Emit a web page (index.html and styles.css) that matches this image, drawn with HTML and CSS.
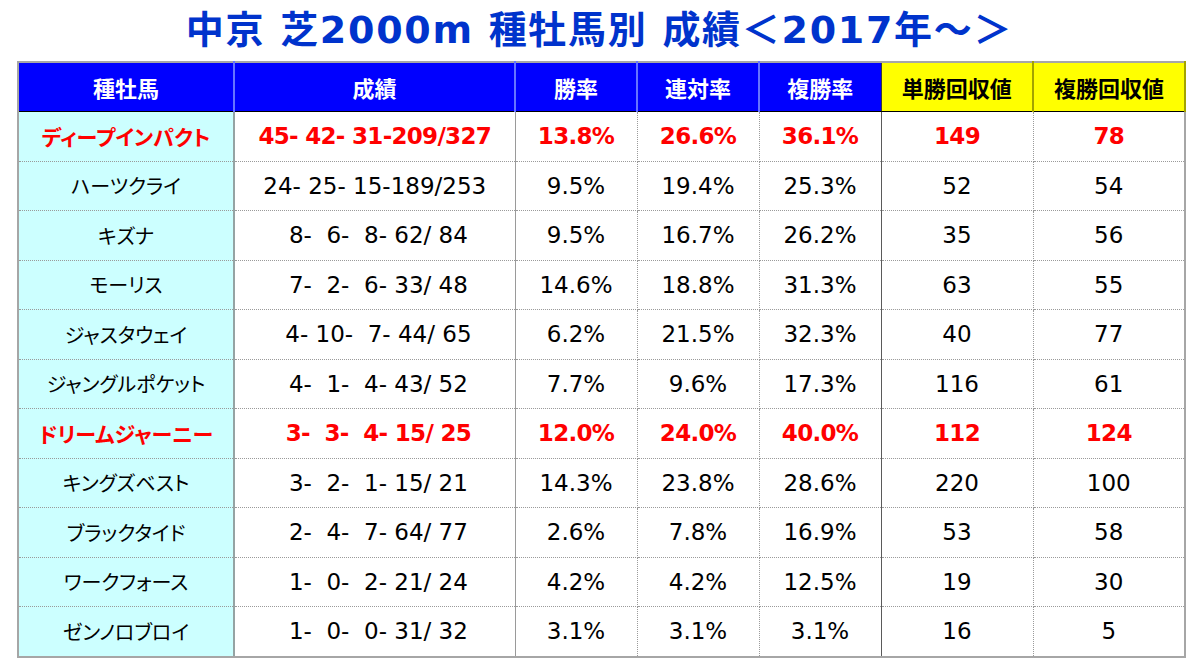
FILE: index.html
```html
<!DOCTYPE html>
<html lang="ja">
<head>
<meta charset="utf-8">
<title>中京 芝2000m 種牡馬別 成績</title>
<link rel="stylesheet" href="styles.css">
</head>
<body>
<h1 class="title">中京 芝2000m 種牡馬別 成績＜2017年～＞</h1>
<table class="stats">
  <colgroup>
    <col class="c-name"><col class="c-rec"><col class="c-rate"><col class="c-rate"><col class="c-rate"><col class="c-ret"><col class="c-ret">
  </colgroup>
  <thead>
    <tr>
      <th class="h-blue">種牡馬</th>
      <th class="h-blue">成績</th>
      <th class="h-blue">勝率</th>
      <th class="h-blue">連対率</th>
      <th class="h-blue h-last">複勝率</th>
      <th class="h-yellow">単勝回収値</th>
      <th class="h-yellow">複勝回収値</th>
    </tr>
  </thead>
  <tbody>
    <tr class="hl"><td class="name">ディープインパクト</td><td class="rec">45- 42- 31-209/327</td><td class="r1">13.8%</td><td class="r2">26.6%</td><td class="r3">36.1%</td><td class="v1">149</td><td class="v2">78</td></tr>
    <tr><td class="name">ハーツクライ</td><td class="rec">24- 25- 15-189/253</td><td class="r1">9.5%</td><td class="r2">19.4%</td><td class="r3">25.3%</td><td class="v1">52</td><td class="v2">54</td></tr>
    <tr><td class="name">キズナ</td><td class="rec"> 8-  6-  8- 62/ 84</td><td class="r1">9.5%</td><td class="r2">16.7%</td><td class="r3">26.2%</td><td class="v1">35</td><td class="v2">56</td></tr>
    <tr><td class="name">モーリス</td><td class="rec"> 7-  2-  6- 33/ 48</td><td class="r1">14.6%</td><td class="r2">18.8%</td><td class="r3">31.3%</td><td class="v1">63</td><td class="v2">55</td></tr>
    <tr><td class="name">ジャスタウェイ</td><td class="rec"> 4- 10-  7- 44/ 65</td><td class="r1">6.2%</td><td class="r2">21.5%</td><td class="r3">32.3%</td><td class="v1">40</td><td class="v2">77</td></tr>
    <tr><td class="name">ジャングルポケット</td><td class="rec"> 4-  1-  4- 43/ 52</td><td class="r1">7.7%</td><td class="r2">9.6%</td><td class="r3">17.3%</td><td class="v1">116</td><td class="v2">61</td></tr>
    <tr class="hl"><td class="name">ドリームジャーニー</td><td class="rec"> 3-  3-  4- 15/ 25</td><td class="r1">12.0%</td><td class="r2">24.0%</td><td class="r3">40.0%</td><td class="v1">112</td><td class="v2">124</td></tr>
    <tr><td class="name">キングズベスト</td><td class="rec"> 3-  2-  1- 15/ 21</td><td class="r1">14.3%</td><td class="r2">23.8%</td><td class="r3">28.6%</td><td class="v1">220</td><td class="v2">100</td></tr>
    <tr><td class="name">ブラックタイド</td><td class="rec"> 2-  4-  7- 64/ 77</td><td class="r1">2.6%</td><td class="r2">7.8%</td><td class="r3">16.9%</td><td class="v1">53</td><td class="v2">58</td></tr>
    <tr><td class="name">ワークフォース</td><td class="rec"> 1-  0-  2- 21/ 24</td><td class="r1">4.2%</td><td class="r2">4.2%</td><td class="r3">12.5%</td><td class="v1">19</td><td class="v2">30</td></tr>
    <tr><td class="name">ゼンノロブロイ</td><td class="rec"> 1-  0-  0- 31/ 32</td><td class="r1">3.1%</td><td class="r2">3.1%</td><td class="r3">3.1%</td><td class="v1">16</td><td class="v2">5</td></tr>
  </tbody>
</table>
</body>
</html>
```

FILE: styles.css
```css
html, body {
  margin: 0;
  padding: 0;
  background: #ffffff;
}

body {
  font-family: "DejaVu Sans", "Noto Sans CJK JP", sans-serif;
  color: #000000;
}

.title {
  margin: 0;
  height: 61px;
  line-height: 60px;
  text-align: center;
  font-family: "DejaVu Sans", "Noto Sans CJK JP", sans-serif;
  font-size: 38px;
  font-weight: 700;
  color: #0033cc;
  letter-spacing: 1.7px;
}

.stats {
  margin-left: 17px;
  width: 1166px;
  border-collapse: collapse;
  table-layout: fixed;
  border: 2px solid #a6a6a6;
}

.c-name { width: 216px; }
.c-rec { width: 281px; }
.c-rate { width: 122px; }
.c-ret { width: 152px; }

.stats th {
  height: 48px;
  padding: 0;
  font-family: "Noto Sans CJK JP", sans-serif;
  font-size: 22px;
  font-weight: 700;
  text-align: center;
  border-bottom: 1px solid #000000;
}

.h-blue {
  background: #0000ff;
  color: #ffffff;
  border-right: 2px solid #6673ff;
}

.h-blue.h-last {
  border-right: 1px solid #3a3a3a;
}

.h-yellow {
  background: #ffff00;
  color: #000000;
  border-right: 2px solid #a3a300;
}

.stats td {
  height: 48.5px;
  padding: 0;
  text-align: center;
  font-size: 23px;
  border-bottom: 1px dotted #9a9a9a;
  white-space: pre;
}

.stats tbody tr:last-child td {
  border-bottom: 2px solid #a6a6a6;
}

.stats td.name {
  background: #ccffff;
  font-family: "Noto Sans CJK JP", sans-serif;
  font-size: 20px;
  font-feature-settings: "palt";
  border-right: 2px solid #95a3a3;
}

.stats td.rec {
  border-right: 1px solid #9a9a9a;
}

.stats td.r1,
.stats td.r2 {
  border-right: 1px dotted #9a9a9a;
}

.stats td.r3 {
  border-right: 1px solid #5a5a5a;
}

.stats td.v1 {
  border-right: 1px dotted #9a9a9a;
}

.stats td.v2 {
  border-right: 2px solid #a6a6a6;
}

.stats tr.hl td {
  color: #ff0000;
  font-weight: 700;
  letter-spacing: -0.7px;
}

.stats tr.hl td.name {
  font-size: 21px;
  letter-spacing: 0;
}
```
